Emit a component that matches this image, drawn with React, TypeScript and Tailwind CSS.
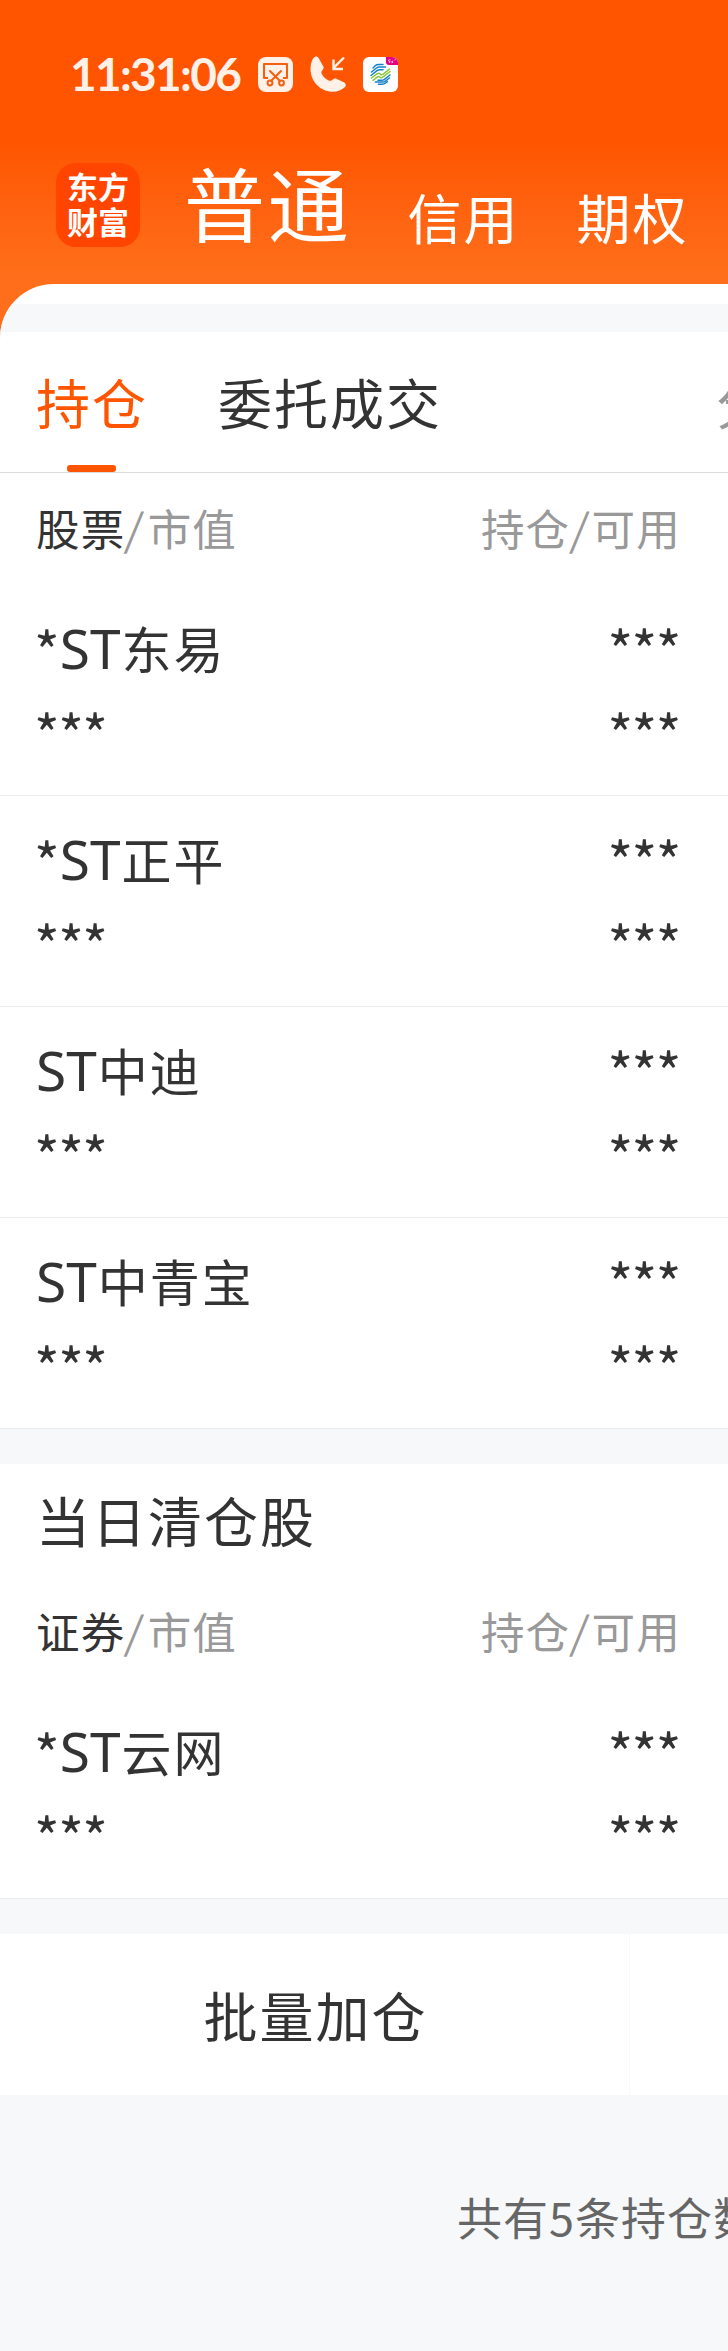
import clsx from 'clsx';

const holdings = ['*ST东易', '*ST正平', 'ST中迪', 'ST中青宝'];
const cleared = ['*ST云网'];

function ScreenshotIcon() {
  return (
    <svg width="35" height="35" viewBox="0 0 35 35" fill="none">
      <rect width="35" height="35" rx="8" fill="#fff0e8" />
      <g stroke="#f4600f" strokeWidth="2">
        <path d="M10 21H6V7h23v14h-4" strokeLinejoin="round" />
        <path d="M12 14l10 10M23 14L13 24" strokeLinecap="round" />
        <circle cx="12" cy="26" r="2.4" />
        <circle cx="23.5" cy="26" r="2.4" />
      </g>
    </svg>
  );
}

function IncomingCallIcon() {
  return (
    <svg width="36" height="36" viewBox="0 0 36 36" fill="none">
      <path
        d="M3.500 2C5 0 7.500 0 8.600 2l4.600 8.200c.8 1.600.4 2.800-.8 4-1.200 1.200-1.200 2.400-.6 3.800 1.400 3 3.800 5.200 6.800 6.400 1.600.6 3 .3 4-.7 1.200-1.200 2.600-1.500 4.200-.8l7 3.400c2 1 2.500 3.200 1.200 4.800-3.200 3-7.400 4.700-12 4.700C10.500 35.800.5 25.500.5 13 .5 8.800 1.400 4.800 3.500 2z"
        fill="#fff0e8"
      />
      <path d="M34 1.500L23.500 12M23.500 3.500V13h9.500" stroke="#fff0e8" strokeWidth="2.400" />
    </svg>
  );
}

function CarrierIcon() {
  return (
    <svg width="35" height="35" viewBox="0 0 35 35" fill="none">
      <rect width="35" height="35" rx="6" fill="#fff" />
      <path d="M23 0h6a6 6 0 0 1 6 6v2h-9a3 3 0 0 1-3-3z" fill="#e4007f" />
      <path d="M25.500 3l1.200 3M25.500 3l2-.4M26 4.600l1.500-.3M28.500 4l1.500 2M30 3.500l-1.300 2.700M31.500 3l1.500-1" stroke="#fff" strokeWidth=".6" />
      <g strokeWidth="1.500" strokeLinecap="round" strokeLinejoin="round">
        <path d="M10 11l2.500-2.500c1-1 2-1 3.500-1h4M8.500 15l5-4c1-.8 1.500-1 3-1h6M8 18.500l6-4.800c1-.8 1.600-1 3-1h3" stroke="#1683c6" />
        <path d="M8.500 21l5.500-4.200c1.300-.8 2.500-.8 3.200.2.800 1.200 1.800 1 3 .2l6.300-5M10 23.300l4.500-3.500c1-.6 1.800-.4 2.600.4.800.7 1.900.5 3-.3l7-5.400" stroke="#8cc63f" />
        <path d="M27 18l-5.500 4.300c-1 .8-1.800 1-3.200 1H15M26.500 21l-4 3c-1 .8-1.800 1-3.200 1h-7M24.500 24.500l-1.500 1.200c-1.500 1.300-2.500 1.600-4 1.600h-3.500" stroke="#1683c6" />
      </g>
    </svg>
  );
}

function ColumnHeader({ label, className }: { label: string; className?: string }) {
  return (
    <div className={clsx('flex items-center justify-between pl-9 pr-[47px] text-[43.500px] tracking-[1.200px] text-[#999]', className)}>
      <div>
        <span className="text-[#333]">{label}</span>
        <span className="inline-block -skew-x-6 pl-px pr-[3px]">/</span>市值
      </div>
      <div>
        持仓<span className="inline-block -skew-x-6 px-[1.500px]">/</span>可用
      </div>
    </div>
  );
}

// latin letters are set a little larger than the hanzi next to them
function StockName({ name }: { name: string }) {
  const star = name.startsWith('*');
  const hanzi = name.replace('*ST', '').replace('ST', '');
  return (
    <div className="flex items-baseline">
      {star && <span className="-ml-0.5 translate-y-1 text-[55px] leading-[50px]">*</span>}
      <span className="font-['Noto_Sans'] text-[55px]">ST</span>
      <span className="ml-px tracking-[2px]">{hanzi}</span>
    </div>
  );
}

function Mask() {
  return <span className="-ml-0.5 text-[55px] tracking-[-1.500px]">***</span>;
}

function StockRow({ name }: { name: string }) {
  return (
    <div className="flex h-[211px] flex-col border-b border-[#ebecee] pl-9 pr-12 pt-5 text-[50px] text-[#333]">
      <div className="flex h-[84px] items-center justify-between">
        <StockName name={name} />
        <div className="pt-0.5">
          <Mask />
        </div>
      </div>
      <div className="flex h-[84px] items-center justify-between pt-0.5">
        <Mask />
        <Mask />
      </div>
    </div>
  );
}

export default function App() {
  return (
    <div className="h-[2351px] w-[728px] overflow-hidden bg-[#f7f8fa] font-['Noto_Sans_CJK_SC',sans-serif] leading-none whitespace-nowrap">
      <div className="bg-linear-to-b from-[#ff5500] from-[30%] to-[#ff6e1a] to-[58%]">
        <div className="flex h-[148px] items-center pl-[70px]">
          <span className="w-[188px] font-['Lato'] text-[46px] font-bold tracking-[-1.700px] text-[#fff0e8]">11:31:06</span>
          <ScreenshotIcon />
          <div className="ml-[17px]">
            <IncomingCallIcon />
          </div>
          <div className="ml-[17px]">
            <CarrierIcon />
          </div>
        </div>
        <div className="flex h-[136px] pl-14 text-white">
          <div className="mt-[15px] size-[84px] rounded-[20px] bg-[#ff4500] pt-[5px] text-center text-[31px] font-bold leading-[35px]">
            东方
            <br />
            财富
          </div>
          <span className="ml-[44px] mt-3 text-[81px] tracking-[2.700px]">普通</span>
          <span className="ml-[56px] mt-[42px] text-[54px] tracking-[2px]">信用</span>
          <span className="ml-[57px] mt-[42px] text-[54px] tracking-[2px]">期权</span>
        </div>

        <div className="overflow-hidden rounded-tl-[54px] bg-white">
          <div className="mt-5 h-7 bg-[#f7f8fa]" />
          <div className="flex h-[141px] border-b border-[#dddddf] pl-9 text-[54px] tracking-[2px] text-[#333]">
            <div className="flex flex-col items-center text-[#ff5500]">
              <span className="mt-[43px] h-[90px]">持仓</span>
              <div className="mr-0.5 h-[7px] w-[49px] rounded-[3px] bg-[#ff5500]" />
            </div>
            <span className="ml-[70px] mt-[43px]">委托成交</span>
            <span className="ml-[274px] mt-[43px] text-[#999]">分时</span>
          </div>
        </div>
      </div>

      <div className="bg-white">
        <ColumnHeader label="股票" className="h-[112px] pb-0.5" />
        {holdings.map((name) => (
          <StockRow key={name} name={name} />
        ))}
      </div>

      <div className="mt-[35px] bg-white">
        <div className="flex h-[112px] items-center pl-9 text-[54px] tracking-[2px] text-[#333]">当日清仓股</div>
        <ColumnHeader label="证券" className="h-[112px] pb-0.5" />
        {cleared.map((name) => (
          <StockRow key={name} name={name} />
        ))}
      </div>

      <div className="mt-[35px] flex h-[161px] items-center bg-white text-[#333]">
        <div className="flex h-full w-[630px] items-center justify-center border-r border-[#f7f8fa] pl-0.5 text-[54px] tracking-[2px]">
          批量加仓
        </div>
      </div>

      <div className="pl-[457px] pt-[99px] text-[45px] tracking-[1px] text-[#666]">共有5条持仓数据</div>
    </div>
  );
}
